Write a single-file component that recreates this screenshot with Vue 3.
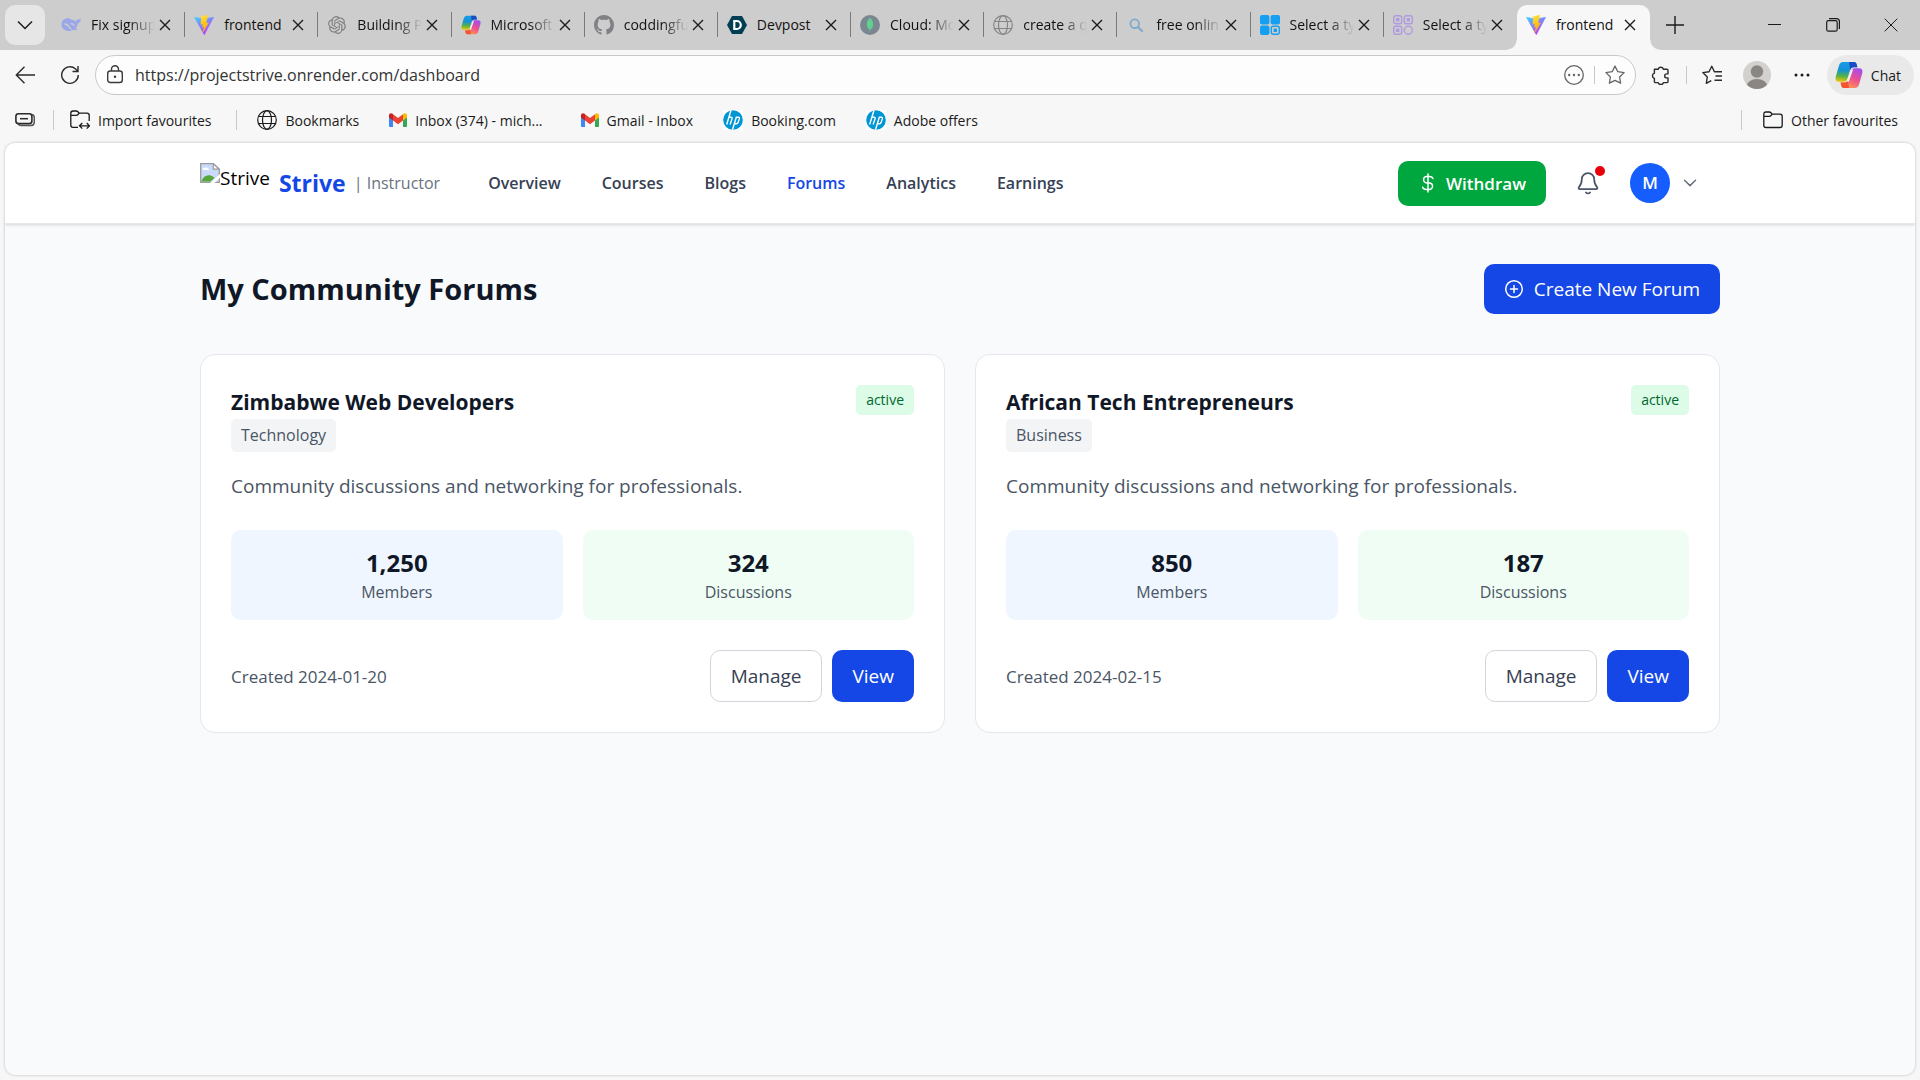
<script setup>
import { ref } from 'vue'

const tabs = [
  { title: 'Fix signup', icon: 'whale', fade: true },
  { title: 'frontend', icon: 'vite' },
  { title: 'Building P', icon: 'openai', fade: true },
  { title: 'Microsoft', icon: 'copilot', fade: true },
  { title: 'coddingfu', icon: 'github', fade: true },
  { title: 'Devpost', icon: 'devpost' },
  { title: 'Cloud: Mo', icon: 'mongo', fade: true },
  { title: 'create a q', icon: 'globe-grey', fade: true },
  { title: 'free onlin', icon: 'search', fade: true },
  { title: 'Select a ty', icon: 'qr-blue', fade: true },
  { title: 'Select a ty', icon: 'qr-purple', fade: true },
  { title: 'frontend', icon: 'vite', active: true }
]

const bookmarks = [
  { title: 'Bookmarks', icon: 'globe' },
  { title: 'Inbox (374) - mich...', icon: 'gmail', wide: true },
  { title: 'Gmail - Inbox', icon: 'gmail' },
  { title: 'Booking.com', icon: 'hp' },
  { title: 'Adobe offers', icon: 'hp' }
]

const navItems = ['Overview', 'Courses', 'Blogs', 'Forums', 'Analytics', 'Earnings']
const activeNav = ref('Forums')

const url = ref('https://projectstrive.onrender.com/dashboard')

const forums = ref([
  {
    name: 'Zimbabwe Web Developers',
    category: 'Technology',
    status: 'active',
    members: 1250,
    discussions: 324,
    created: '2024-01-20'
  },
  {
    name: 'African Tech Entrepreneurs',
    category: 'Business',
    status: 'active',
    members: 850,
    discussions: 187,
    created: '2024-02-15'
  }
])
</script>

<template>
  <div class="window">
    <!-- shared icon shapes -->
    <svg class="sprite" width="0" height="0" aria-hidden="true">
      <defs>
        <linearGradient id="viteBody" x1="0" y1="0" x2="0.6" y2="1">
          <stop offset="0" stop-color="#41d1ff" />
          <stop offset="1" stop-color="#bd34fe" />
        </linearGradient>
        <linearGradient id="viteBolt" x1="0.4" y1="0" x2="0.6" y2="1">
          <stop offset="0" stop-color="#ffdd35" />
          <stop offset="1" stop-color="#ffa800" />
        </linearGradient>
        <linearGradient id="copLeft" x1="0.3" y1="0" x2="0.2" y2="1">
          <stop offset="0" stop-color="#1b9be6" />
          <stop offset="0.4" stop-color="#1492d6" />
          <stop offset="0.7" stop-color="#52b24a" />
          <stop offset="1" stop-color="#f2c800" />
        </linearGradient>
        <linearGradient id="copRight" x1="0.8" y1="0" x2="0.3" y2="1">
          <stop offset="0" stop-color="#a04df0" />
          <stop offset="0.5" stop-color="#ec4f90" />
          <stop offset="1" stop-color="#ff9a4d" />
        </linearGradient>
      </defs>
      <symbol id="whale" viewBox="0 0 20 20">
        <path d="M.5 9.500C.5 5.500 3.200 3.200 7 3.200c1.400 0 2.400.7 3.400 1.600.8.700 1.400.3 1.800-.7.300 1.300 1.300 2.200 2.500 2.400.3-1.100 1.300-2 2.300-2 .9 0 1.700-.3 2.700-1 .1 2.600-1 4.300-2.900 4.700-.3 2.300-1 4-2.300 5.300.9.500 1.500 1 2 1.600-1.500.3-2.900.1-4-.3C7.500 17.600.5 15.500.5 9.500z" fill="#9aa8ea" />
        <path d="M3.500 9c2 0 3.600 1.300 4.600 3 .8 1.400 1.700 2 2.600 2.100" fill="none" stroke="#cdcdcd" stroke-width="1.400" />
        <path d="M9.800 8.900c1.600-.6 3 .4 3.200 1.900" fill="none" stroke="#cdcdcd" stroke-width="1.400" />
      </symbol>
      <symbol id="vite" viewBox="0 0 20 20">
        <path d="M.4 2.300 10 4l9.600-1.700L10.300 19.700z" fill="url(#viteBody)" stroke="url(#viteBody)" stroke-width=".6" stroke-linejoin="round" />
        <path d="M13.800.2 7.400 1.500 6.900 9.300l2.300-.5-.8 3.500 1.900-.6-1.300 5.500 5.500-9.400-2.600.5z" fill="url(#viteBolt)" stroke="url(#viteBolt)" stroke-width=".5" stroke-linejoin="round" />
      </symbol>
      <symbol id="openai" viewBox="-1.500 -1.500 27 27">
        <path fill="#7e7e7e" d="M22.282 9.821a5.985 5.985 0 0 0-.516-4.910 6.046 6.046 0 0 0-6.510-2.900A6.065 6.065 0 0 0 4.981 4.182a5.985 5.985 0 0 0-3.998 2.900 6.046 6.046 0 0 0 .743 7.097 5.980 5.980 0 0 0 .510 4.911 6.051 6.051 0 0 0 6.515 2.900A5.985 5.985 0 0 0 13.260 24a6.056 6.056 0 0 0 5.772-4.206 5.990 5.990 0 0 0 3.998-2.900 6.056 6.056 0 0 0-.748-7.073zM13.260 22.430a4.476 4.476 0 0 1-2.877-1.041l.142-.080 4.778-2.758a.795.795 0 0 0 .393-.681v-6.737l2.020 1.169a.071.071 0 0 1 .038.052v5.583a4.504 4.504 0 0 1-4.494 4.493zM3.600 18.304a4.471 4.471 0 0 1-.535-3.014l.142.085 4.783 2.759a.771.771 0 0 0 .781 0l5.843-3.369v2.332a.080.080 0 0 1-.033.062L9.740 19.950a4.499 4.499 0 0 1-6.140-1.646zM2.340 7.896a4.485 4.485 0 0 1 2.366-1.973V11.600a.766.766 0 0 0 .388.677l5.815 3.354-2.020 1.169a.076.076 0 0 1-.071 0l-4.830-2.787A4.504 4.504 0 0 1 2.340 7.872zm16.597 3.855-5.833-3.387L15.119 7.200a.076.076 0 0 1 .071 0l4.830 2.791a4.494 4.494 0 0 1-.677 8.105v-5.678a.790.790 0 0 0-.406-.667zm2.010-3.023-.141-.085-4.774-2.782a.776.776 0 0 0-.785 0L9.409 9.230V6.897a.066.066 0 0 1 .028-.061l4.830-2.787a4.499 4.499 0 0 1 6.680 4.660zM8.307 12.863l-2.020-1.164a.080.080 0 0 1-.038-.057V6.075a4.499 4.499 0 0 1 7.375-3.454l-.142.081-4.778 2.758a.795.795 0 0 0-.393.682zm1.097-2.365 2.602-1.500 2.607 1.500v2.999l-2.597 1.500-2.607-1.500z" />
      </symbol>
      <symbol id="copilot" viewBox="0 0 28 28">
        <path d="M8 1h11c1.300 0 2 .8 2.400 2l.9 3.300h-3.500c-2 0-3.200 1-3.800 3l-2.600 8.500c-.7 2.100-2 3-4 3H4C1 20.800 0 18.700.800 15.500L4 4.500C4.700 2.200 6 1 8 1z" fill="url(#copLeft)" />
        <path d="M14 1h5.200c1.300 0 2 .8 2.400 2l.9 3.300h-3.700c-1.800 0-3 .9-3.600 2.600z" fill="#1a4bc4" />
        <path d="M20 27H9c-1.300 0-2-.8-2.400-2l-.9-3.400h3.500c2 0 3.200-1 3.800-3l2.600-8.400c.7-2.100 2-3 4-3H24c3 0 4 2.100 3.200 5.300L24 23.500C23.300 25.800 22 27 20 27z" fill="url(#copRight)" />
        <path d="M14 27H8.800c-1.300 0-2-.8-2.400-2l-.9-3.400h3.700c1.800 0 3-.9 3.600-2.600z" fill="#f4542f" />
        <path d="M16.300 8.500h1.800l-4.200 12h-2.200z" fill="#f4f4f4" />
      </symbol>
      <symbol id="github" viewBox="0 0 16 16">
        <path fill="#7f8185" d="M8 0C3.580 0 0 3.580 0 8c0 3.540 2.290 6.530 5.470 7.590.4.070.55-.17.55-.38 0-.19-.01-.82-.01-1.490-2.010.37-2.530-.49-2.690-.94-.09-.23-.48-.94-.82-1.130-.28-.15-.68-.52-.01-.53.63-.01 1.080.58 1.230.82.72 1.210 1.870.87 2.330.66.07-.52.28-.87.51-1.070-1.780-.2-3.640-.89-3.640-3.950 0-.87.31-1.590.82-2.150-.08-.2-.36-1.020.08-2.120 0 0 .67-.21 2.200.82.64-.18 1.320-.27 2-.27s1.360.09 2 .27c1.530-1.040 2.200-.82 2.200-.82.44 1.100.16 1.920.08 2.120.51.56.82 1.270.82 2.150 0 3.070-1.870 3.750-3.650 3.950.29.25.54.73.54 1.480 0 1.070-.01 1.930-.01 2.200 0 .21.15.46.55.38A8.010 8.010 0 0 0 16 8c0-4.420-3.580-8-8-8z" />
      </symbol>
      <symbol id="devpost" viewBox="0 0 20 20">
        <path d="M5 1h10l5 9-5 9H5l-5-9z" fill="#003e54" />
        <path d="M7.300 6h2.500a4 4 0 0 1 0 8H7.300z" fill="none" stroke="#fff" stroke-width="2.200" />
      </symbol>
      <symbol id="mongo" viewBox="0 0 20 20">
        <circle cx="10" cy="10" r="10" fill="#7b8790" />
        <path d="M10 2.800c2.500 2.500 3.300 4.700 3.100 7.200-.2 2.200-1.200 3.600-2.700 4.800L10 17l-.4-2.200C8.100 13.600 7.100 12.200 6.900 10 6.700 7.500 7.500 5.300 10 2.800z" fill="#5fd08d" />
      </symbol>
      <symbol id="globe" viewBox="0 0 20 20">
        <g fill="none" stroke="currentColor" stroke-width="1.200">
          <circle cx="10" cy="10" r="9.300" />
          <ellipse cx="10" cy="10" rx="4.500" ry="9.300" />
          <path d="M1.500 6.500h17M1.500 13.500h17" />
        </g>
      </symbol>
      <symbol id="globe-grey" viewBox="0 0 20 20">
        <g fill="none" stroke="#858585" stroke-width="1.200">
          <circle cx="10" cy="10" r="9.300" />
          <ellipse cx="10" cy="10" rx="4.500" ry="9.300" />
          <path d="M1.500 6.500h17M1.500 13.500h17" />
        </g>
      </symbol>
      <symbol id="search" viewBox="0 0 20 20">
        <circle cx="8.700" cy="8.700" r="4.300" fill="none" stroke="#7fa9cd" stroke-width="1.800" />
        <path d="m12 12 4 4" stroke="#7fa9cd" stroke-width="2.200" stroke-linecap="round" />
      </symbol>
      <symbol id="qr-blue" viewBox="0 0 20 20">
        <g fill="#159ff2">
          <rect width="9.400" height="9.400" rx="2" />
          <rect x="10.600" width="9.400" height="9.400" rx="2" />
          <rect y="10.600" width="9.400" height="9.400" rx="2" />
          <rect x="13.600" y="13.600" width="3.400" height="3.400" rx=".6" />
        </g>
        <rect x="11.300" y="11.300" width="8" height="8" rx="2" fill="none" stroke="#159ff2" stroke-width="1.400" />
      </symbol>
      <symbol id="qr-purple" viewBox="0 0 20 20">
        <g fill="none" stroke="#b09be0" stroke-width="1.400">
          <rect x=".7" y=".7" width="8" height="8" rx="2" />
          <rect x="11.300" y=".7" width="8" height="8" rx="2" />
          <rect x=".7" y="11.300" width="8" height="8" rx="2" />
          <circle cx="15.300" cy="15.300" r="4" />
        </g>
        <g fill="#b09be0">
          <rect x="3" y="3" width="3.400" height="3.400" />
          <rect x="13.600" y="3" width="3.400" height="3.400" />
          <rect x="3" y="13.600" width="3.400" height="3.400" />
        </g>
      </symbol>
      <symbol id="gmail" viewBox="0 0 18 14">
        <path d="M0 2.500V13c0 .6.400 1 1 1h3V6z" fill="#4285f4" />
        <path d="M18 2.500V13c0 .6-.4 1-1 1h-3V6z" fill="#34a853" />
        <path d="M14 1.200 18 2v2.500L14 7.500z" fill="#fbbc04" />
        <path d="M18 2.500C18 .4 16-.5 14.400.800L14 1.200v3L18 4z" fill="#fbbc04" />
        <path d="M4 1.200v6.300l5 3.700 5-3.700V1.200L9 5z" fill="#ea4335" />
        <path d="M0 2.500C0 .4 2-.5 3.600.800L4 1.200v6.300l-4-3z" fill="#c5221f" />
      </symbol>
      <symbol id="hp" viewBox="0 0 20 20">
        <rect width="20" height="20" fill="#fff" />
        <circle cx="10" cy="10" r="9.800" fill="#0096d6" />
        <g fill="none" stroke="#fff" stroke-width="1.400">
          <path d="M8 .3 3.700 14.500M5.800 7.300H8c1 0 1.300.6 1 1.600l-1.900 5.600" />
          <path d="M9.500 19.800 13.300 7.300h2c1 0 1.300.6 1 1.600l-1.200 3.700c-.3.800-.7 1.200-1.500 1.200h-2.200" />
        </g>
      </symbol>
      <symbol id="folder" viewBox="0 0 20 20">
        <path d="M.8 15.300V4.200C.8 2.700 1.600 2 3 2h3.200c.7 0 1.200.2 1.700.7l1.300 1.400H17c1.400 0 2.200.8 2.200 2.200v9c0 1.400-.8 2.200-2.200 2.200H3c-1.400 0-2.200-.8-2.200-2.200zM.8 6.300h5.400c.8 0 1.300-.2 1.800-.8l1.200-1.400" fill="none" stroke="currentColor" stroke-width="1.300" stroke-linejoin="round" />
      </symbol>
      <symbol id="close" viewBox="0 0 12 12">
        <path d="m1 1 10 10M11 1 1 11" fill="none" stroke="currentColor" stroke-width="1.400" />
      </symbol>
    </svg>

    <!-- tab strip -->
    <div class="tab-strip">
      <button class="tab-search" aria-label="Search tabs">
        <svg width="16" height="10" viewBox="0 0 16 10"><path d="m1 1.500 7 7 7-7" fill="none" stroke="#1b1b1b" stroke-width="1.500" /></svg>
      </button>
      <div class="tabs">
        <div v-for="(tab, index) in tabs" :key="index" :class="['tab', { active: tab.active }]">
          <svg class="favicon"><use :href="'#' + tab.icon" /></svg>
          <span :class="['tab-title', { fade: tab.fade }]">{{ tab.title }}</span>
          <button class="tab-close" aria-label="Close tab">
            <svg width="12" height="12"><use href="#close" /></svg>
          </button>
        </div>
      </div>
      <div class="window-controls">
        <button class="new-tab" aria-label="New tab">
          <svg width="20" height="20" viewBox="0 0 20 20"><path d="M10 1v18M1 10h18" stroke="#1b1b1b" stroke-width="1.400" /></svg>
        </button>
        <button class="control" aria-label="Minimise">
          <svg width="14" height="14" viewBox="0 0 14 14"><path d="M0 6.500h13" stroke="#1b1b1b" /></svg>
        </button>
        <button class="control" aria-label="Restore">
          <svg width="14" height="14" viewBox="0 0 14 14">
            <rect x=".7" y="2.700" width="10.500" height="10.500" rx="1.800" fill="none" stroke="#1b1b1b" stroke-width="1.200" />
            <path d="M3 .7h7.500c2 0 2.900 1 2.900 2.900V11" fill="none" stroke="#1b1b1b" stroke-width="1.200" />
          </svg>
        </button>
        <button class="control" aria-label="Close">
          <svg width="14" height="14" viewBox="0 0 14 14"><path d="m.7.700 12.600 12.600M13.300.700.700 13.300" stroke="#1b1b1b" /></svg>
        </button>
      </div>
    </div>

    <!-- address bar -->
    <div class="toolbar">
      <button class="tool" aria-label="Back">
        <svg width="20" height="20" viewBox="0 0 20 20"><path d="M20 10H1.500M9.500 1.800 1.300 10l8.200 8.200" fill="none" stroke="#2b2b2b" stroke-width="1.400" /></svg>
      </button>
      <button class="tool" aria-label="Refresh">
        <svg width="20" height="20" viewBox="0 0 20 20"><path d="M18.300 10A8.300 8.300 0 1 1 15.600 3.900L17.500 6M18 1v5.500h-5.500" fill="none" stroke="#2b2b2b" stroke-width="1.400" /></svg>
      </button>
      <div class="address">
        <svg width="18" height="20" viewBox="0 0 18 20">
          <rect x="1.700" y="6" width="14.600" height="11.500" rx="2.500" fill="none" stroke="#3b3b3b" stroke-width="1.400" />
          <path d="M5.500 6V4.300a3.500 3.500 0 0 1 7 0V6" fill="none" stroke="#3b3b3b" stroke-width="1.400" />
          <circle cx="9" cy="11.700" r="1.200" fill="#3b3b3b" />
        </svg>
        <input v-model="url" class="address-input" type="text" aria-label="Address" />
        <button class="address-button" aria-label="Page actions">
          <svg width="20" height="20" viewBox="0 0 20 20">
            <circle cx="10" cy="10" r="9.300" fill="none" stroke="#666" stroke-width="1.300" />
            <g fill="#666"><circle cx="5.200" cy="10" r="1.200" /><circle cx="10" cy="10" r="1.200" /><circle cx="14.800" cy="10" r="1.200" /></g>
          </svg>
        </button>
        <span class="divider short"></span>
        <button class="address-button" aria-label="Add to favourites">
          <svg width="20" height="20" viewBox="0 0 20 20"><path d="m10 1.100 2.800 5.600 6.300.9-4.500 4.400 1 6.200L10 15.300l-5.600 2.900 1-6.200L.9 7.600l6.300-.9z" fill="none" stroke="#666" stroke-width="1.300" stroke-linejoin="round" /></svg>
        </button>
      </div>
      <div class="toolbar-right">
        <button class="tool-icon" aria-label="Extensions">
          <svg width="20" height="20" viewBox="0 0 20 20"><path d="M3.400 4.200h3.800a2.700 2.700 0 0 1 5.200 0h3.400c.6 0 1.200.5 1.200 1.200v3.500h-1.300a2 2 0 0 0 0 4H17v3.500c0 .7-.6 1.200-1.200 1.200h-3.400a2.700 2.700 0 0 1-5.200 0H4.600c-.7 0-1.200-.5-1.200-1.200v-3a2.700 2.700 0 0 1 0-5.200z" fill="none" stroke="#2b2b2b" stroke-width="1.400" stroke-linejoin="round" /></svg>
        </button>
        <span class="divider short"></span>
        <button class="tool-icon" aria-label="Favourites">
          <svg width="20" height="20" viewBox="0 0 20 20"><path d="M18 6.800h-5.600L9.800 1.200 7 6.700l-6.200.9 4.500 4.400-1 6.300 5-2.700M20 6.800h-7M13.500 11H20M12.500 15.200H20" fill="none" stroke="#2b2b2b" stroke-width="1.400" stroke-linejoin="round" /></svg>
        </button>
        <button class="profile" aria-label="Profile">
          <svg width="28" height="28" viewBox="0 0 28 28">
            <clipPath id="profileClip"><circle cx="14" cy="14" r="14" /></clipPath>
            <g clip-path="url(#profileClip)">
              <rect width="28" height="28" fill="#d3d1cd" />
              <circle cx="14" cy="10.500" r="6.200" fill="#8a8683" />
              <ellipse cx="14" cy="26" rx="10.500" ry="8" fill="#8a8683" />
            </g>
          </svg>
        </button>
        <button class="tool-icon" aria-label="Settings and more">
          <svg width="16" height="4" viewBox="0 0 16 4"><g fill="#1b1b1b"><circle cx="2" cy="2" r="1.500" /><circle cx="8" cy="2" r="1.500" /><circle cx="14" cy="2" r="1.500" /></g></svg>
        </button>
        <button class="chat">
          <svg width="28" height="28"><use href="#copilot" /></svg>
          Chat
        </button>
      </div>
    </div>

    <!-- favourites bar -->
    <div class="bookmarks">
      <button class="bookmark" aria-label="Workspaces">
        <svg width="20" height="20" viewBox="0 0 20 20">
          <path d="M17 4.500c1.500.4 2.300 1.500 2.300 3v4.300c0 2.300-1.500 3.800-3.800 3.800H6.200c-1.500 0-2.600-.6-3-1.600" fill="none" stroke="#555" stroke-width="1.500" />
          <rect x=".9" y="3.800" width="16" height="9.800" rx="2.600" fill="none" stroke="#2b2b2b" stroke-width="1.600" />
          <path d="M5 8.700h8" stroke="#2b2b2b" stroke-width="1.500" />
        </svg>
      </button>
      <span class="divider"></span>
      <button class="bookmark import">
        <svg width="20" height="20" viewBox="0 0 20 20">
          <path d="M8 17.300H3c-1.400 0-2.200-.8-2.200-2.200V3.200C.8 1.700 1.600 1 3 1h3.200c.7 0 1.200.2 1.700.7l1.300 1.400H17c1.400 0 2.200.8 2.200 2.200V11M.8 5.300h5.400c.8 0 1.300-.2 1.800-.8l1.200-1.400" fill="none" stroke="currentColor" stroke-width="1.300" />
          <path d="M9.500 15.800h10M12.300 13l-2.800 2.800 2.800 2.800M16.700 13l2.800 2.800-2.800 2.800" fill="none" stroke="currentColor" stroke-width="1.300" />
        </svg>
        Import favourites
      </button>
      <span class="divider"></span>
      <div class="bookmark-list">
        <a v-for="mark in bookmarks" :key="mark.title" href="#" :class="['bookmark', { wide: mark.wide }]">
          <svg width="20" height="20" :class="{ gmail: mark.icon === 'gmail' }"><use :href="'#' + mark.icon" /></svg>
          {{ mark.title }}
        </a>
      </div>
      <span class="divider"></span>
      <button class="bookmark other">
        <svg width="20" height="20"><use href="#folder" /></svg>
        Other favourites
      </button>
    </div>

    <!-- web page -->
    <div class="page">
      <header class="site-header">
        <div class="container header-row">
          <a href="#" class="brand">
            <span class="brand-image">
              <svg width="20" height="20" viewBox="0 0 20 20">
                <path d="M.7.700h12.600l6 5.500v13.100H.7z" fill="#c9dafb" stroke="#9b9b9b" stroke-width="1.300" />
                <path d="M2.500 6.200c.3-1.300 1.500-1.700 2.300-1 .5-1.300 2.600-1.200 3 .2 1.100 0 1.500.9 1.300 1.500H2.500z" fill="#fff" />
                <path d="M1.400 18.600C3 13.500 6.500 11.500 10.500 12.500c2 .6 3 1.500 4 2.500l-4 3.600z" fill="#57a639" />
                <path d="M10 20 20 11v3.500L14.500 20z" fill="#fff" />
                <path d="M13.300.7v5.500h6z" fill="#fff" stroke="#9b9b9b" stroke-width="1.200" />
              </svg>
              <span>Strive</span>
            </span>
            <span class="brand-name">Strive</span>
            <span class="brand-role">| Instructor</span>
          </a>
          <nav class="nav">
            <a
              v-for="item in navItems"
              :key="item"
              href="#"
              :class="['nav-link', { active: item === activeNav }]"
              @click.prevent="activeNav = item"
            >{{ item }}</a>
          </nav>
          <div class="header-actions">
            <button class="withdraw">
              <svg width="20" height="20" viewBox="0 0 20 20"><path d="M10 1v18M15 5.500C14.500 4.200 13.300 3.500 11.500 3.500H8.800a3.200 3.200 0 0 0 0 6.400h2.500a3.200 3.200 0 0 1 0 6.500H8.300c-2 0-3.200-.9-3.600-2.200" fill="none" stroke="#fff" stroke-width="1.500" stroke-linecap="round" /></svg>
              Withdraw
            </button>
            <button class="bell" aria-label="Notifications">
              <svg width="24" height="24" viewBox="0 0 24 24" fill="none" stroke="#4a5565" stroke-width="1.700" stroke-linecap="round" stroke-linejoin="round">
                <path d="M5.800 8.300a6.200 6.200 0 0 1 12.400 0c0 3.400.9 5.800 3 8.100.6.700.1 1.700-.7 1.700h-17c-.8 0-1.300-1-.7-1.700 2.100-2.300 3-4.700 3-8.100zM9.900 21.500c1 1.200 3.200 1.200 4.200 0" />
              </svg>
              <span class="bell-dot"></span>
            </button>
            <button class="account" aria-label="Account menu">
              <span class="avatar">M</span>
              <svg width="14" height="8" viewBox="0 0 14 8"><path d="m1.500 1.200 5.500 5.400 5.500-5.400" fill="none" stroke="#6a7282" stroke-width="1.500" stroke-linecap="round" stroke-linejoin="round" /></svg>
            </button>
          </div>
        </div>
      </header>

      <main class="container content">
        <div class="page-title">
          <h1>My Community Forums</h1>
          <button class="create">
            <svg width="20" height="20" viewBox="0 0 20 20" fill="none" stroke="#fff" stroke-width="1.500" stroke-linecap="round">
              <circle cx="10" cy="10" r="8.300" />
              <path d="M10 6.500v7M6.500 10h7" />
            </svg>
            Create New Forum
          </button>
        </div>

        <div class="forum-grid">
          <article v-for="forum in forums" :key="forum.name" class="card">
            <div class="card-top">
              <div>
                <h2>{{ forum.name }}</h2>
                <span class="category">{{ forum.category }}</span>
              </div>
              <span class="status">{{ forum.status }}</span>
            </div>
            <p class="description">Community discussions and networking for professionals.</p>
            <div class="stats">
              <div class="stat members">
                <strong>{{ forum.members.toLocaleString('en-US') }}</strong>
                <span>Members</span>
              </div>
              <div class="stat discussions">
                <strong>{{ forum.discussions }}</strong>
                <span>Discussions</span>
              </div>
            </div>
            <div class="card-footer">
              <span class="created">Created {{ forum.created }}</span>
              <div class="card-actions">
                <button class="manage">Manage</button>
                <button class="view">View</button>
              </div>
            </div>
          </article>
        </div>
      </main>
    </div>
  </div>
</template>

<style>
body {
  margin: 0;
  background: #f7f7f7;
}
</style>

<style scoped>
* {
  box-sizing: border-box;
}

.window {
  display: flex;
  flex-direction: column;
  min-height: 100vh;
  padding-bottom: 5px;
  background: #f7f7f7;
  font-family: 'Segoe UI', 'Open Sans', 'Noto Sans', sans-serif;
  color: #1b1b1b;
}

.sprite {
  position: absolute;
}

button {
  display: flex;
  align-items: center;
  justify-content: center;
  padding: 0;
  border: none;
  background: none;
  font: inherit;
  color: inherit;
  white-space: nowrap;
}

a {
  color: inherit;
  text-decoration: none;
}

svg {
  flex: none;
}

.divider {
  flex: none;
  width: 1px;
  height: 20px;
  background: #c8c8c8;
}

.divider.short {
  height: 18px;
}

/* tab strip */
.tab-strip {
  display: flex;
  height: 50px;
  padding-left: 5px;
  background: #cdcdcd;
}

.tab-search {
  flex: none;
  width: 40px;
  height: 40px;
  margin: 5px 7px 0 0;
  border-radius: 10px;
  background: #e6e6e6;
}

.tabs {
  display: flex;
  flex: 1;
  min-width: 0;
  padding-top: 5px;
}

.tab {
  display: flex;
  flex: 1 1 0;
  align-items: center;
  min-width: 0;
  height: 45px;
  padding: 0 10px 5px 9px;
  position: relative;
}

.tab:not(.active)::after {
  content: '';
  position: absolute;
  right: 0;
  top: 7px;
  width: 1px;
  height: 25px;
  background: #7a7a7a;
}

.tab:nth-last-child(2)::after {
  display: none;
}

.tab.active {
  border-radius: 10px 10px 0 0;
  background: #f7f7f7;
}

.tab.active::before,
.tab.active::after {
  content: '';
  position: absolute;
  bottom: 0;
  width: 10px;
  height: 10px;
}

.tab.active::before {
  right: 100%;
  background: radial-gradient(circle at 0 0, transparent 9px, #f7f7f7 10px);
}

.tab.active::after {
  left: 100%;
  background: radial-gradient(circle at 100% 0, transparent 9px, #f7f7f7 10px);
}

.favicon {
  width: 20px;
  height: 20px;
  margin-right: 10px;
}

.tab-title {
  flex: 1;
  min-width: 0;
  font-size: 14px;
  line-height: 20px;
  white-space: nowrap;
  color: #111;
}

.tab-title.fade {
  mask-image: linear-gradient(to right, #000 60%, transparent);
}

.tab-close {
  flex: none;
  width: 20px;
  height: 20px;
}

.window-controls {
  display: flex;
  flex: none;
  width: 270px;
  justify-content: flex-end;
}

.new-tab {
  width: 50px;
  margin-right: auto;
}

.control {
  width: 58px;
}

/* address bar */
.toolbar {
  display: flex;
  align-items: center;
  height: 50px;
  padding: 0 6px 0 2px;
}

.tool {
  flex: none;
  width: 45px;
  height: 40px;
}

.address {
  display: flex;
  flex: 1;
  align-items: center;
  height: 40px;
  margin-left: 3px;
  padding-left: 10px;
  border: 1px solid #c9c9c9;
  border-radius: 20px;
  background: #fdfdfd;
}

.address-input {
  flex: 1;
  min-width: 0;
  padding: 0 11px;
  border: none;
  outline: none;
  background: none;
  font-family: inherit;
  font-size: 16px;
  color: #333;
}

.address-button {
  width: 40px;
  height: 30px;
}

.toolbar-right {
  display: flex;
  flex: none;
  align-items: center;
}

.tool-icon {
  width: 50px;
  height: 40px;
}

.profile {
  width: 40px;
}

.chat {
  gap: 8px;
  height: 40px;
  padding: 0 13px 0 8px;
  border-radius: 20px;
  background: #e9e9e9;
  font-size: 14px;
}

/* favourites bar */
.bookmarks {
  display: flex;
  align-items: center;
  height: 43px;
  padding: 0 22px 3px 15px;
  font-size: 14px;
}

.bookmark {
  display: flex;
  align-items: center;
  gap: 8px;
  white-space: nowrap;
}

.bookmark + .divider {
  margin-left: 18px;
}

.import {
  margin-left: 16px;
}

.import + .divider {
  margin-left: 25px;
}

.bookmark-list {
  display: flex;
  flex: 1;
  gap: 30px;
  margin-left: 20px;
}

.bookmark-list .wide {
  margin-right: 8px;
}

.gmail {
  width: 18px;
}

.other {
  margin-left: 21px;
}

/* web page */
.page {
  flex: 1;
  margin: 0 5px;
  overflow: hidden;
  border-radius: 10px;
  background: #f9fafb;
  box-shadow: 0 0 3px rgba(0, 0, 0, 0.25);
}

.container {
  max-width: 1600px;
  margin: 0 auto;
  padding: 0 40px;
}

.site-header {
  position: relative;
  border-bottom: 1px solid #e8e8e8;
  background: #fff;
  box-shadow: 0 1px 3px rgba(0, 0, 0, 0.15);
}

.header-row {
  display: flex;
  align-items: center;
  height: 80px;
}

.brand {
  display: flex;
  align-items: center;
}

.brand-image {
  display: flex;
  align-items: flex-start;
  height: 40px;
  margin-right: 9px;
  font-size: 19px;
  line-height: 30px;
  color: #000;
}

.brand-name {
  margin-right: 8px;
  font-size: 23px;
  font-weight: 700;
  color: #1447e6;
}

.brand-role {
  font-size: 16px;
  color: #6a7282;
}

.nav {
  display: flex;
  gap: 41px;
  margin-left: 48px;
}

.nav-link {
  font-size: 16px;
  font-weight: 600;
  line-height: 26px;
  color: #364153;
}

.nav-link.active {
  color: #1447e6;
}

.header-actions {
  display: flex;
  align-items: center;
  margin-left: auto;
  padding-right: 23px;
}

.withdraw {
  gap: 8px;
  height: 45px;
  padding: 0 20px;
  border-radius: 10px;
  background: #00a63e;
  color: #fff;
  font-size: 17px;
  font-weight: 600;
}

.bell {
  position: relative;
  width: 44px;
  height: 44px;
  margin: 0 20px;
}

.bell-dot {
  position: absolute;
  top: 5px;
  right: 5px;
  width: 10px;
  height: 10px;
  border-radius: 50%;
  background: #e7000b;
}

.account {
  gap: 13px;
}

.avatar {
  width: 40px;
  height: 40px;
  border-radius: 50%;
  background: #155dfc;
  color: #fff;
  font-size: 17px;
  font-weight: 600;
  line-height: 40px;
}

.content {
  padding-top: 40px;
  padding-bottom: 40px;
}

.page-title {
  display: flex;
  align-items: center;
  justify-content: space-between;
  margin-bottom: 40px;
}

.page-title h1 {
  margin: 0;
  font-size: 29px;
  font-weight: 700;
  line-height: 40px;
  color: #101828;
}

.create {
  gap: 10px;
  height: 50px;
  padding: 0 20px;
  border-radius: 10px;
  background: #1447e6;
  color: #fff;
  font-size: 19px;
}

.forum-grid {
  display: grid;
  grid-template-columns: 1fr 1fr;
  gap: 30px;
}

.card {
  padding: 30px;
  border: 1px solid #e5e7eb;
  border-radius: 15px;
  background: #fff;
}

.card-top {
  display: flex;
  align-items: flex-start;
  justify-content: space-between;
  margin-bottom: 20px;
}

.card h2 {
  margin: 0;
  font-size: 21px;
  font-weight: 700;
  line-height: 34px;
  color: #101828;
}

.category {
  display: block;
  width: fit-content;
  padding: 4px 10px;
  border-radius: 5px;
  background: #f3f4f6;
  color: #4a5565;
  font-size: 16px;
  line-height: 25px;
}

.status {
  padding: 5px 10px;
  border-radius: 5px;
  background: #dcfce7;
  color: #016630;
  font-size: 14px;
  line-height: 20px;
}

.description {
  margin: 0 0 30px;
  font-size: 19px;
  line-height: 28px;
  color: #4a5565;
}

.stats {
  display: grid;
  grid-template-columns: 1fr 1fr;
  gap: 20px;
  margin-bottom: 30px;
}

.stat {
  display: flex;
  flex-direction: column;
  align-items: center;
  padding: 15px;
  border-radius: 10px;
}

.stat strong {
  font-size: 24px;
  line-height: 35px;
  color: #101828;
}

.stat span {
  font-size: 16px;
  line-height: 25px;
  color: #4a5565;
}

.members {
  background: #eff6ff;
}

.discussions {
  background: #f0fdf4;
}

.card-footer {
  display: flex;
  align-items: center;
  justify-content: space-between;
}

.created {
  font-size: 17px;
  color: #4a5565;
}

.card-actions {
  display: flex;
  gap: 10px;
}

.manage,
.view {
  height: 52px;
  padding: 0 20px;
  border-radius: 10px;
  font-size: 19px;
}

.manage {
  border: 1px solid #d1d5dc;
  color: #364153;
}

.view {
  background: #1447e6;
  color: #fff;
}
</style>
